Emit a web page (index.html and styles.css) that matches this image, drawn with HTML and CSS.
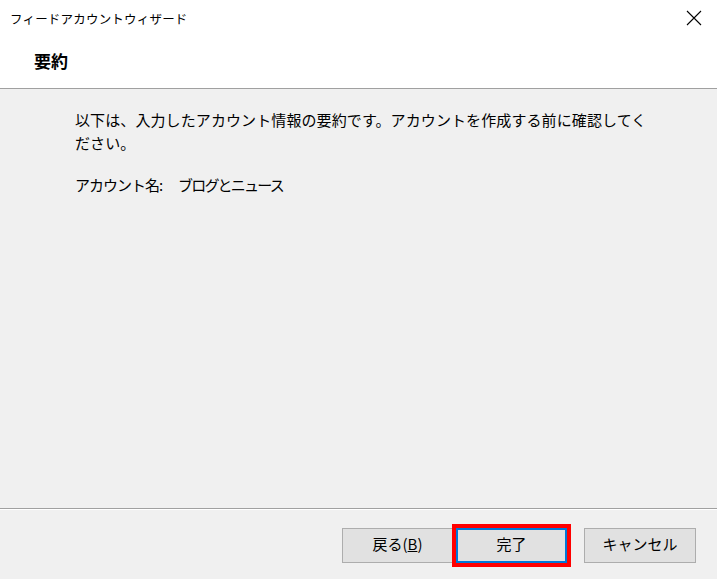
FILE: index.html
```html
<!DOCTYPE html>
<html lang="ja">
<head>
  <meta charset="UTF-8" />
  <meta name="viewport" content="width=device-width, initial-scale=1.0" />
  <title>フィードアカウントウィザード</title>
  <link rel="stylesheet" href="styles.css">
</head>
<body>
  <div class="dialog">
    <div class="header">
      <div class="titlebar">
        <span class="title">フィードアカウントウィザード</span>
        <span class="close">
          <svg width="16" height="16" viewBox="0 0 16 16">
            <path d="M1 1 L15 15 M15 1 L1 15" stroke="#000" stroke-width="1.1" fill="none" />
          </svg>
        </span>
      </div>
      <div class="page-title">要約</div>
    </div>

    <div class="content">
      <p class="intro">以下は、入力したアカウント情報の要約です。アカウントを作成する前に確認してください。</p>
      <div class="summary">
        <span class="label">アカウント名:</span>
        <span class="value">ブログとニュース</span>
      </div>
    </div>

    <div class="footer">
      <button class="btn back">戻る(<u>B</u>)</button>
      <button class="btn finish">完了</button>
      <button class="btn cancel">キャンセル</button>
    </div>
  </div>
</body>
</html>
```

FILE: styles.css
```css
body {
  margin: 0;
  font-family: "Noto Sans CJK JP", "Noto Sans", sans-serif;
  color: #000;
  background: #f0f0f0;
}
.dialog {
  width: 717px;
  height: 579px;
  display: flex;
  flex-direction: column;
  background: #f0f0f0;
}
.header {
  height: 89px;
  background: #fff;
  border-bottom: 1px solid #a0a0a0;
  box-sizing: border-box;
  flex: none;
}
.titlebar {
  height: 36px;
  display: flex;
  align-items: center;
  justify-content: space-between;
  padding: 0 15px 0 10px;
}
.title {
  font-size: 12.5px;
  letter-spacing: 0.2px;
}
.close {
  display: flex;
  width: 16px;
  height: 16px;
}
.page-title {
  margin-left: 34px;
  margin-top: 13px;
  font-size: 17px;
  font-weight: bold;
  line-height: 24px;
}
.content {
  flex: 1;
  padding: 0 75px;
  font-size: 15px;
}
.intro {
  width: 576px;
  margin: 19px 0 0;
  line-height: 23px;
  letter-spacing: 0.1px;
}
.summary {
  display: flex;
  margin-top: 19px;
  line-height: 23px;
}
.label {
  width: 103px;
  letter-spacing: -1px;
}
.value {
  letter-spacing: -1.8px;
}
.footer {
  height: 71px;
  flex: none;
  box-sizing: border-box;
  border-top: 1px solid #a0a0a0;
  box-shadow: inset 0 1px 0 #fff;
  display: flex;
  justify-content: flex-end;
  align-items: flex-start;
  padding: 19px 21px 0 0;
}
.btn {
  height: 35px;
  box-sizing: border-box;
  background: #e1e1e1;
  border: 1px solid #adadad;
  font-family: "Noto Sans CJK JP", "Noto Sans", sans-serif;
  font-size: 15px;
  color: #000;
  padding: 0 0 4px;
}
.back {
  width: 111px;
}
.finish {
  width: 111px;
  margin-left: 3px;
  border: 2px solid #0078d7;
  outline: 4px solid #f00;
}
.cancel {
  width: 112px;
  margin-left: 17px;
}
```
